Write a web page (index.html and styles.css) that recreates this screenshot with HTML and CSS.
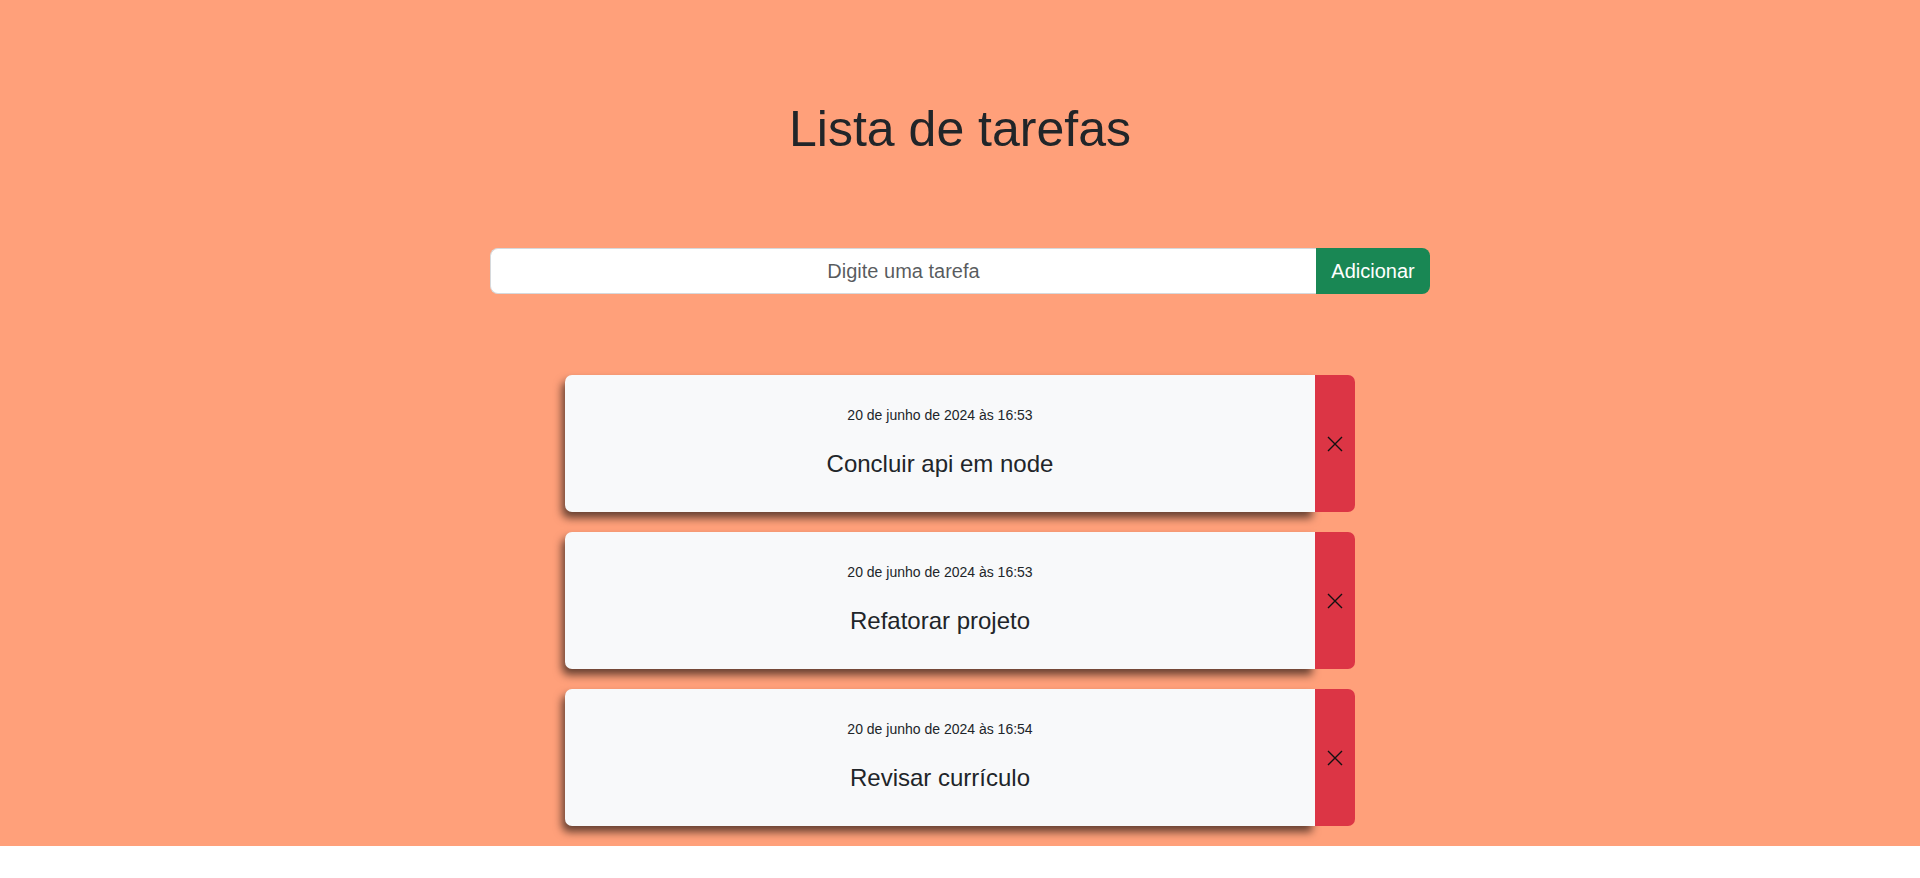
FILE: index.html
```html
<!DOCTYPE html>
<html lang="pt-BR">
<head>
<meta charset="utf-8">
<title>Lista de tarefas</title>
<link rel="stylesheet" href="styles.css">
</head>
<body>
<main class="app">
  <h1 class="title">Lista de tarefas</h1>
  <form class="add-form" onsubmit="return false">
    <input class="add-input" type="text" placeholder="Digite uma tarefa">
    <button class="add-btn" type="submit">Adicionar</button>
  </form>
  <ul class="task-list">
    <li class="task">
      <div class="task-body">
        <p class="task-date">20 de junho de 2024 às 16:53</p>
        <h4 class="task-title">Concluir api em node</h4>
      </div>
      <button class="task-delete" aria-label="Remover">
        <svg width="16" height="16" viewBox="0 0 16 16"><path d="M1 1L15 15M15 1L1 15" stroke="#111" stroke-width="1.4" fill="none"/></svg>
      </button>
    </li>
    <li class="task">
      <div class="task-body">
        <p class="task-date">20 de junho de 2024 às 16:53</p>
        <h4 class="task-title">Refatorar projeto</h4>
      </div>
      <button class="task-delete" aria-label="Remover">
        <svg width="16" height="16" viewBox="0 0 16 16"><path d="M1 1L15 15M15 1L1 15" stroke="#111" stroke-width="1.4" fill="none"/></svg>
      </button>
    </li>
    <li class="task">
      <div class="task-body">
        <p class="task-date">20 de junho de 2024 às 16:54</p>
        <h4 class="task-title">Revisar currículo</h4>
      </div>
      <button class="task-delete" aria-label="Remover">
        <svg width="16" height="16" viewBox="0 0 16 16"><path d="M1 1L15 15M15 1L1 15" stroke="#111" stroke-width="1.4" fill="none"/></svg>
      </button>
    </li>
  </ul>
</main>
</body>
</html>
```

FILE: styles.css
```css
* { box-sizing: border-box; }

html, body {
  margin: 0;
  padding: 0;
  background: #ffffff;
  font-family: "Liberation Sans", Arial, sans-serif;
  color: #212529;
}

.app {
  background: #ffa07a;
  padding: 99px 0 20px;
  display: flex;
  flex-direction: column;
  align-items: center;
}

.title {
  margin: 0;
  font-size: 50px;
  line-height: 60px;
  font-weight: 400;
  color: #212529;
}

.add-form {
  margin-top: 89px;
  width: 940px;
  height: 46px;
  display: flex;
}

.add-input {
  flex: 1;
  height: 100%;
  border: 1px solid #d6d9dc;
  border-right: none;
  border-radius: 8px 0 0 8px;
  background: #fff;
  font-family: inherit;
  font-size: 20px;
  text-align: center;
  color: #212529;
  outline: none;
  padding: 0 16px;
}

.add-input::placeholder {
  color: rgba(33, 37, 41, 0.75);
}

.add-btn {
  width: 114px;
  height: 100%;
  border: none;
  border-radius: 0 8px 8px 0;
  background: #198754;
  color: #fff;
  font-family: inherit;
  font-size: 20px;
  padding: 0;
}

.task-list {
  list-style: none;
  margin: 81px 0 0;
  padding: 0;
  display: flex;
  flex-direction: column;
  gap: 20px;
}

.task {
  width: 790px;
  height: 137px;
  display: flex;
}

.task-body {
  flex: 1;
  background: #f8f9fa;
  border-radius: 7px 0 0 7px;
  box-shadow: -3px 6px 9px rgba(0, 0, 0, 0.6);
  text-align: center;
  padding-top: 30px;
}

.task-date {
  margin: 0;
  font-size: 14px;
  line-height: 21px;
}

.task-title {
  margin: 23px 0 0;
  font-size: 24px;
  line-height: 29px;
  font-weight: 400;
}

.task-delete {
  width: 40px;
  border: none;
  padding: 0;
  background: #dc3545;
  border-radius: 0 7px 7px 0;
  display: flex;
  align-items: center;
  justify-content: center;
}

.task-delete svg {
  display: block;
}
```
